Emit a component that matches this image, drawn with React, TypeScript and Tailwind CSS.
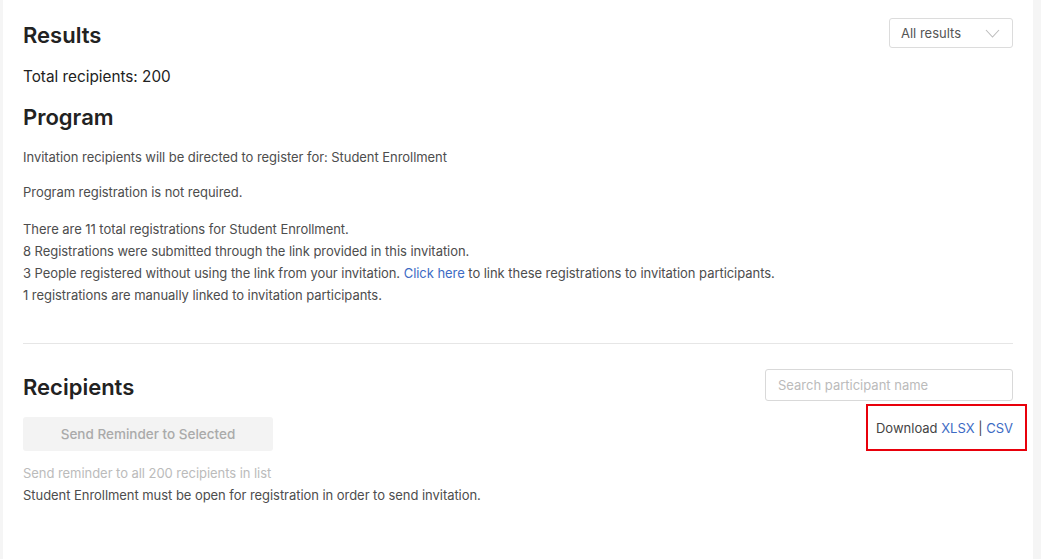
import React from "react";

export default function App() {
  return (
    <div className="min-h-[559px] w-full bg-[#f5f5f5] pl-[3px] pr-[8px] font-['Inter',sans-serif]">
      <div className="min-h-[559px] bg-white px-[20px] pt-[18px] text-[#333]">
        <div className="flex items-start justify-between">
          <h2 className="text-[22px] font-semibold leading-[34px] text-[#222]">Results</h2>
          <div className="flex h-[30px] w-[124px] items-center justify-between rounded-[3px] border border-[#dcdcdc] pl-[11px] pr-[12px]">
            <span className="pt-[2px] text-[13px] text-[#555]">All results</span>
            <svg width="15" height="9" viewBox="0 0 15 9" fill="none">
              <path d="M1 1l6.5 7L14 1" stroke="#bdbdbd" strokeWidth="1.1" />
            </svg>
          </div>
        </div>
        <p className="mt-[14px] text-[15.3px] leading-[22px] text-[#222]">Total recipients: 200</p>
        <h2 className="mt-[12px] text-[22px] font-semibold leading-[34px] text-[#222]">Program</h2>
        <p className="mt-[12px] text-[13px] leading-[22px] tracking-[-0.05px] text-[#4d4d4d]">
          Invitation recipients will be directed to register for: Student Enrollment
        </p>
        <p className="mt-[13px] text-[13px] leading-[22px] tracking-[-0.05px] text-[#4d4d4d]">Program registration is not required.</p>
        <div className="mt-[15px] text-[13px] leading-[22px] tracking-[-0.05px] text-[#4d4d4d]">
          <p>There are 11 total registrations for Student Enrollment.</p>
          <p>8 Registrations were submitted through the link provided in this invitation.</p>
          <p>
            3 People registered without using the link from your invitation.{" "}
            <a className="text-[#3d6bc4]">Click here</a> to link these registrations to invitation participants.
          </p>
          <p>1 registrations are manually linked to invitation participants.</p>
        </div>
        <div className="mt-[37px] h-px bg-[#e6e6e6]" />
        <div className="mt-[25px] flex items-start justify-between">
          <div className="flex flex-col">
            <h2 className="mt-[1px] text-[22px] font-semibold leading-[34px] text-[#222]">Recipients</h2>
            <button className="mt-[13px] h-[34px] w-[250px] rounded-[3px] bg-[#f3f3f3] text-[13.5px] font-medium text-[#aaa]">
              Send Reminder to Selected
            </button>
            <p className="mt-[11px] text-[13px] leading-[22px] tracking-[-0.05px] text-[#bbb]">Send reminder to all 200 recipients in list</p>
            <p className="text-[13px] leading-[22px] tracking-[-0.05px] text-[#4d4d4d]">
              Student Enrollment must be open for registration in order to send invitation.
            </p>
          </div>
          <div className="flex flex-col items-end">
            <div className="flex h-[32px] w-[248px] items-center rounded-[3px] border border-[#d9d9d9] px-[12px] pt-[1px]">
              <span className="text-[13px] text-[#bbb]">Search participant name</span>
            </div>
            <div className="relative mt-[17px] text-[13px] leading-[20px] text-[#444]">
              Download <a className="text-[#3d6bc4]">XLSX</a> | <a className="text-[#3d6bc4]">CSV</a>
              <div className="absolute -bottom-[13px] -left-[10px] -right-[14px] -top-[14px] border-2 border-[#e8000b]" />
            </div>
          </div>
        </div>
      </div>
    </div>
  );
}
